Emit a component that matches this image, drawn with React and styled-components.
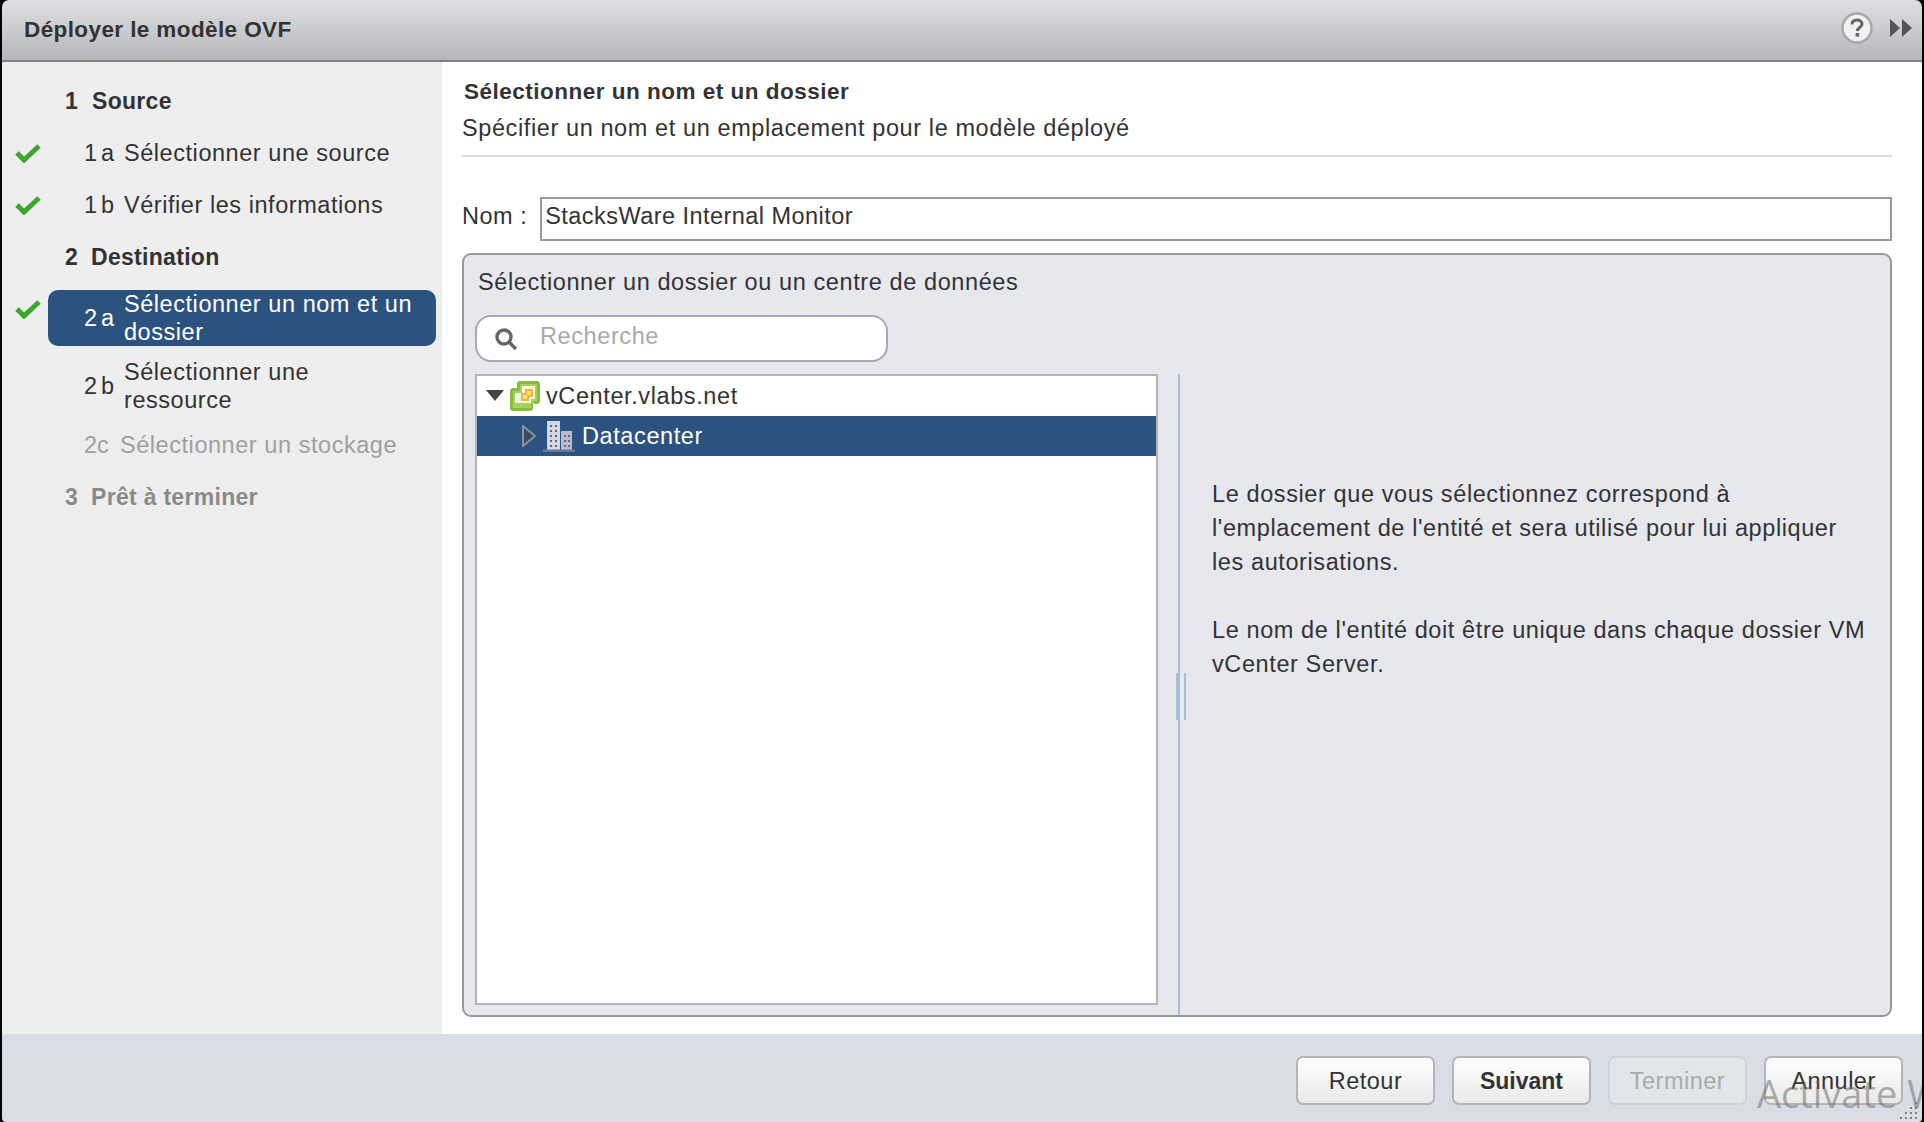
import React from "react";
import styled, { createGlobalStyle } from "styled-components";

const GlobalStyle = createGlobalStyle`
  html, body {
    margin: 0;
    padding: 0;
    background: #000;
  }
  * {
    box-sizing: border-box;
  }
`;

const Dialog = styled.div`
  width: 1924px;
  height: 1122px;
  padding: 0 2px;
  display: flex;
  flex-direction: column;
  overflow: hidden;
  font-family: "Liberation Sans", Arial, sans-serif;
  font-size: 23.5px;
  letter-spacing: 0.6px;
  color: #333;
`;

const TitleBar = styled.header`
  height: 62px;
  flex: none;
  padding: 0 10px 0 22px;
  display: flex;
  align-items: center;
  justify-content: space-between;
  background: linear-gradient(#dfe0e3, #b5b6ba);
  border-bottom: 2px solid #808080;
  border-radius: 7px 7px 0 0;
`;

const Title = styled.h1`
  margin: 0;
  font-size: 22.5px;
  letter-spacing: 0.4px;
  font-weight: bold;
  color: #333;
`;

const TitleTools = styled.div`
  display: flex;
  align-items: center;
  gap: 17px;
  padding-bottom: 4px;
`;

const Body = styled.div`
  flex: 1;
  min-height: 0;
  display: flex;
  background: #fff;
`;

const Sidebar = styled.nav`
  width: 440px;
  flex: none;
  padding-top: 13px;
  background: #eeeeee;
  display: flex;
  flex-direction: column;
`;

const StepRow = styled.div`
  display: flex;
  min-height: ${(p) => (p.$tall ? 56 : 52)}px;
  margin: ${(p) => (p.$tall ? "7px 0 5px" : "0")};
`;

const CheckSlot = styled.div`
  width: 46px;
  flex: none;
  padding-left: 13px;
  padding-bottom: ${(p) => (p.$raised ? 18 : 0)}px;
  display: flex;
  align-items: center;
`;

const StepBody = styled.div`
  flex: 1;
  margin-right: 6px;
  padding-left: ${(p) => (p.$group ? 17 : 36)}px;
  display: flex;
  align-items: center;
  line-height: 28px;
  border-radius: 10px;
  font-size: ${(p) => (p.$group ? 23 : 23.5)}px;
  letter-spacing: ${(p) => (p.$group ? 0.3 : 0.55)}px;
  font-weight: ${(p) => (p.$group ? "bold" : "normal")};
  color: ${(p) =>
    p.$active ? "#fff" : p.$muted ? (p.$group ? "#8a8a8a" : "#a0a0a0") : "#333"};
  background: ${(p) => (p.$active ? "#2c5380" : "transparent")};
`;

const StepNumber = styled.span`
  flex: none;
  width: ${(p) => p.$width}px;
  letter-spacing: ${(p) => (p.$spaced ? 4 : 0)}px;
`;

const StepLabel = styled.span`
  flex: 1;
  padding-right: 14px;
`;

const Main = styled.main`
  flex: 1;
  min-width: 0;
  padding: 15px 30px 17px 20px;
  display: flex;
  flex-direction: column;
`;

const PageTitle = styled.h2`
  margin: 0 0 0 2px;
  font-size: 22.5px;
  letter-spacing: 0.5px;
  line-height: 30px;
  font-weight: bold;
  color: #333;
`;

const PageSubtitle = styled.p`
  margin: 0;
  padding: 7px 0 13px;
  line-height: 28px;
  border-bottom: 2px solid #dddddd;
`;

const NameRow = styled.div`
  margin-top: 40px;
  display: flex;
  align-items: center;
  gap: 13px;
`;

const NameLabel = styled.label`
  padding-bottom: 6px;
  letter-spacing: 0.5px;
`;

const NameInput = styled.div`
  flex: 1;
  height: 44px;
  padding: 0 3px 6px;
  display: flex;
  align-items: center;
  letter-spacing: 0.45px;
  background: #fff;
  border: 2px solid #999999;
`;

const FolderPanel = styled.section`
  margin-top: 12px;
  flex: 1;
  min-height: 0;
  display: flex;
  flex-direction: column;
  background: #e6e8ee;
  border: 2px solid #999999;
  border-radius: 9px;
`;

const PanelHeading = styled.div`
  padding: 13px 14px 0;
  line-height: 28px;
  height: 60px;
`;

const SearchBox = styled.div`
  width: 413px;
  height: 47px;
  margin-left: 11px;
  padding-left: 17px;
  display: flex;
  align-items: center;
  gap: 22px;
  background: #fff;
  border: 2px solid #aaaaaa;
  border-radius: 16px;
  color: #aaaaaa;
  line-height: 36px;
`;

const SearchText = styled.span`
  padding-bottom: 5px;
`;

const PanelColumns = styled.div`
  flex: 1;
  min-height: 0;
  margin-top: 12px;
  display: flex;
`;

const TreeColumn = styled.div`
  width: 716px;
  flex: none;
  padding: 0 20px 10px 11px;
  border-right: 2px solid #a9bdd6;
  position: relative;
`;

const Grip = styled.span`
  position: absolute;
  right: -8px;
  top: 299px;
  width: 10px;
  height: 47px;
  border-left: 2px solid #a9bdd6;
  border-right: 2px solid #a9bdd6;
`;

const Tree = styled.div`
  height: 100%;
  background: #fff;
  border: 2px solid #b4b4b4;
`;

const TreeRow = styled.div`
  height: 40px;
  display: flex;
  align-items: center;
  padding-left: ${(p) => p.$indent}px;
  gap: ${(p) => p.$gap}px;
  color: ${(p) => (p.$selected ? "#fff" : "#333")};
  background: ${(p) => (p.$selected ? "#2c5380" : "transparent")};
`;

const HelpColumn = styled.div`
  flex: 1;
  padding: 103px 18px 0 32px;
  line-height: 34px;
`;

const HelpParagraph = styled.p`
  margin: 0 0 34px;
`;

const Footer = styled.footer`
  height: 88px;
  flex: none;
  padding: 22px 19px 0 0;
  display: flex;
  justify-content: flex-end;
  align-items: flex-start;
  gap: 17px;
  background: #d9dee6;
  border-radius: 0 0 4px 4px;
  position: relative;
  overflow: hidden;
`;

const FooterButton = styled.button`
  width: 139px;
  height: 49px;
  padding: 2px 0 0;
  font-family: inherit;
  font-size: ${(p) => (p.$primary ? 23 : 23.5)}px;
  letter-spacing: ${(p) => (p.$primary ? 0 : 0.5)}px;
  font-weight: ${(p) => (p.$primary ? "bold" : "normal")};
  color: ${(p) => (p.disabled ? "#aaaaaa" : "#333")};
  background: ${(p) =>
    p.disabled ? "#e2e6ea" : "linear-gradient(#ffffff, #e9e9e9)"};
  border: 2px solid ${(p) => (p.disabled ? "#cfd3d8" : "#b5b5b5")};
  border-radius: 7px;
`;

const Watermark = styled.span`
  position: absolute;
  left: 1755px;
  top: 34px;
  font-family: "Open Sans", sans-serif;
  font-size: 38px;
  letter-spacing: 0;
  line-height: 50px;
  white-space: nowrap;
  color: rgba(110, 110, 110, 0.55);
  pointer-events: none;
`;

const ResizeGrip = styled.svg`
  position: absolute;
  right: 2px;
  bottom: 3px;
`;

const Check = () => (
  <svg width="26" height="20" viewBox="0 0 26 20">
    <path d="M2 10l7 7L24 3" fill="none" stroke="#3ea52f" strokeWidth="5" />
  </svg>
);

const HelpIcon = () => (
  <svg width="32" height="32" viewBox="0 0 32 32">
    <circle cx="16" cy="16" r="14.5" fill="#f2f2f2" stroke="#a9a9a9" strokeWidth="2.5" />
    <path
      d="M11 12.5c0-3 2.2-4.5 5-4.5s5 1.6 5 4c0 3.6-4.6 3.4-4.6 7"
      fill="none"
      stroke="#666"
      strokeWidth="3"
    />
    <rect x="14.6" y="21" width="3.6" height="3.6" fill="#666" />
  </svg>
);

const ExpandIcon = () => (
  <svg width="22" height="20" viewBox="0 0 22 20">
    <path d="M0 1l10 9-10 9zM12 1l10 9-10 9z" fill="#555" />
  </svg>
);

const SearchIcon = () => (
  <svg width="24" height="24" viewBox="0 0 24 24">
    <circle cx="10" cy="10" r="7" fill="none" stroke="#666" strokeWidth="3.4" />
    <path d="M15 15l7 7" stroke="#666" strokeWidth="3.4" />
  </svg>
);

const CollapseArrow = () => (
  <svg width="18" height="12" viewBox="0 0 18 12">
    <path d="M0 0h18L9 11z" fill="#444" />
  </svg>
);

const ExpandArrow = () => (
  <svg width="14" height="22" viewBox="0 0 14 22">
    <path d="M1 1l12 10L1 21z" fill="#3d4a5c" stroke="#8494a8" strokeWidth="2" />
  </svg>
);

const VCenterIcon = () => (
  <svg width="30" height="30" viewBox="0 0 30 30">
    <path d="M9 0h19l2 2v19l-2 2h-5v5l-2 2H2l-2-2V9l2-2h5V2z" fill="#86bc40" />
    <path d="M10 3h17v17h-3v3h-3v4H3V10h7z" fill="#a6d15f" />
    <path d="M12 5h13v13h-4v4H5V12h7z" fill="#f1f7e2" />
    <path d="M15 8h8v8h-4v4h-8v-8h4z" fill="#f1b52f" />
    <path d="M17 10h4v4h-4zM13 14h4v4h-4z" fill="#fbe08a" />
  </svg>
);

const DatacenterIcon = () => (
  <svg width="32" height="31" viewBox="0 0 32 31">
    <path d="M4 0h13v29H4z" fill="#d5d7e4" />
    <path d="M18 10h11v19H18z" fill="#b9bccf" />
    <path
      d="M7 4h2v2H7zM12 4h2v2h-2zM7 9h2v2H7zM12 9h2v2h-2zM7 14h2v2H7zM12 14h2v2h-2zM7 19h2v2H7zM12 19h2v2h-2zM7 24h2v2H7zM12 24h2v2h-2zM21 14h2v2h-2zM25 14h2v2h-2zM21 19h2v2h-2zM25 19h2v2h-2zM21 24h2v2h-2zM25 24h2v2h-2z"
      fill="#5e6180"
    />
    <path d="M0 28.5h32V31H0z" fill="#6f7292" />
  </svg>
);

const CornerGrip = () => (
  <ResizeGrip width="20" height="17" viewBox="0 0 20 17">
    <path
      d="M15 0h2v2h-2zM10 5h2v2h-2zM15 5h2v2h-2zM5 10h2v2H5zM10 10h2v2h-2zM15 10h2v2h-2zM0 15h2v2H0zM5 15h2v2H5zM10 15h2v2h-2zM15 15h2v2h-2z"
      fill="#7c8188"
    />
  </ResizeGrip>
);

const steps = [
  { number: "1", label: "Source", group: true, width: 27 },
  { number: "1a", label: "Sélectionner une source", done: true, spaced: true, width: 40 },
  { number: "1b", label: "Vérifier les informations", done: true, spaced: true, width: 40 },
  { number: "2", label: "Destination", group: true, width: 26 },
  { number: "2a", label: "Sélectionner un nom et un dossier", done: true, active: true, tall: true, spaced: true, width: 40 },
  { number: "2b", label: "Sélectionner une ressource", tall: true, spaced: true, width: 40 },
  { number: "2c", label: "Sélectionner un stockage", muted: true, width: 36 },
  { number: "3", label: "Prêt à terminer", group: true, muted: true, width: 26 },
];

export default function App() {
  return (
    <Dialog>
      <GlobalStyle />
      <TitleBar>
        <Title>Déployer le modèle OVF</Title>
        <TitleTools>
          <HelpIcon />
          <ExpandIcon />
        </TitleTools>
      </TitleBar>
      <Body>
        <Sidebar>
          {steps.map((step) => (
            <StepRow key={step.number} $tall={step.tall}>
              <CheckSlot $raised={step.active}>{step.done && <Check />}</CheckSlot>
              <StepBody $group={step.group} $active={step.active} $muted={step.muted}>
                <StepNumber $spaced={step.spaced} $width={step.width}>
                  {step.number}
                </StepNumber>
                <StepLabel>{step.label}</StepLabel>
              </StepBody>
            </StepRow>
          ))}
        </Sidebar>
        <Main>
          <PageTitle>Sélectionner un nom et un dossier</PageTitle>
          <PageSubtitle>Spécifier un nom et un emplacement pour le modèle déployé</PageSubtitle>
          <NameRow>
            <NameLabel>Nom :</NameLabel>
            <NameInput>StacksWare Internal Monitor</NameInput>
          </NameRow>
          <FolderPanel>
            <PanelHeading>Sélectionner un dossier ou un centre de données</PanelHeading>
            <SearchBox>
              <SearchIcon />
              <SearchText>Recherche</SearchText>
            </SearchBox>
            <PanelColumns>
              <TreeColumn>
                <Tree>
                  <TreeRow $indent={9} $gap={6}>
                    <CollapseArrow />
                    <VCenterIcon />
                    vCenter.vlabs.net
                  </TreeRow>
                  <TreeRow $selected $indent={45} $gap={7}>
                    <ExpandArrow />
                    <DatacenterIcon />
                    Datacenter
                  </TreeRow>
                </Tree>
                <Grip />
              </TreeColumn>
              <HelpColumn>
                <HelpParagraph>
                  Le dossier que vous sélectionnez correspond à l'emplacement de l'entité et sera utilisé pour lui appliquer les autorisations.
                </HelpParagraph>
                <HelpParagraph>
                  Le nom de l'entité doit être unique dans chaque dossier VM vCenter Server.
                </HelpParagraph>
              </HelpColumn>
            </PanelColumns>
          </FolderPanel>
        </Main>
      </Body>
      <Footer>
        <FooterButton>Retour</FooterButton>
        <FooterButton $primary>Suivant</FooterButton>
        <FooterButton disabled>Terminer</FooterButton>
        <FooterButton>Annuler</FooterButton>
        <Watermark>Activate Windows</Watermark>
        <CornerGrip />
      </Footer>
    </Dialog>
  );
}
